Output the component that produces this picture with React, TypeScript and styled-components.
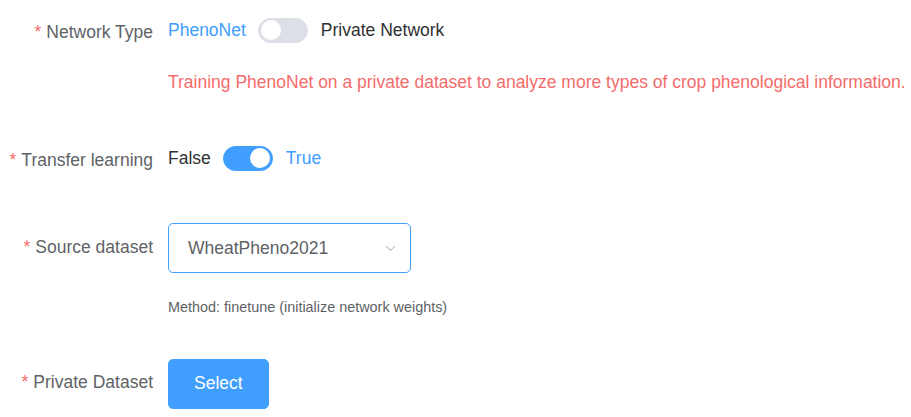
import React from "react";
import styled, { createGlobalStyle } from "styled-components";

const Global = createGlobalStyle`
  html, body { margin: 0; padding: 0; background: #fff; }
  body { font-family: "Liberation Sans", Arial, sans-serif; }
`;

const Form = styled.div`
  padding-top: 7px;
  font-family: "Liberation Sans", Arial, sans-serif;
  font-size: 17.5px;
`;

const Item = styled.div<{ $mb: number }>`
  margin-bottom: ${(p) => p.$mb}px;
`;

const Row = styled.div`
  display: flex;
  align-items: flex-start;
`;

const Label = styled.label`
  width: 168px;
  box-sizing: border-box;
  padding-right: 15px;
  text-align: right;
  line-height: 50px;
  height: 50px;
  color: #606266;
  flex-shrink: 0;
  &::before {
    content: "*";
    color: #f56c6c;
    margin-right: 5px;
  }
`;

const Content = styled.div`
  line-height: 50px;
  min-height: 50px;
  flex: 1;
  min-width: 0;
`;

const Indented = styled.div`
  margin-left: 168px;
`;

const SwitchWrap = styled.div`
  display: inline-flex;
  align-items: center;
  height: 25px;
  line-height: 25px;
  vertical-align: middle;
  margin-bottom: 6px;
`;

const SwitchLabel = styled.span<{ $active: boolean; $side: "left" | "right" }>`
  font-size: 17.5px;
  color: ${(p) => (p.$active ? "#409eff" : "#303133")};
  ${(p) => (p.$side === "left" ? "margin-right: 12.5px;" : "margin-left: 12.5px;")}
`;

const Track = styled.span<{ $on: boolean }>`
  position: relative;
  display: inline-block;
  width: 50px;
  height: 25px;
  box-sizing: border-box;
  border-radius: 12.5px;
  border: 1.25px solid ${(p) => (p.$on ? "#409eff" : "#dcdfe6")};
  background: ${(p) => (p.$on ? "#409eff" : "#dcdfe6")};
  &::after {
    content: "";
    position: absolute;
    top: 1.25px;
    left: ${(p) => (p.$on ? "26px" : "1.25px")};
    width: 20px;
    height: 20px;
    border-radius: 50%;
    background: #fff;
  }
`;

const Warning = styled.div`
  line-height: 50px;
  color: #f56c6c;
  white-space: nowrap;
`;

const Select = styled.div`
  display: inline-flex;
  align-items: center;
  justify-content: space-between;
  box-sizing: border-box;
  width: 243px;
  height: 50px;
  padding: 0 14px 0 19px;
  border: 1px solid #409eff;
  border-radius: 5px;
  color: #606266;
  vertical-align: middle;
  line-height: 48px;
`;

const Hint = styled.div`
  margin-top: 24px;
  font-size: 14.4px;
  line-height: 20px;
  color: #606266;
`;

const Button = styled.button`
  display: inline-block;
  height: 50px;
  padding: 0 25px;
  font-family: "Liberation Sans", Arial, sans-serif;
  font-size: 17.5px;
  color: #fff;
  background: #409eff;
  border: 1px solid #409eff;
  border-radius: 5px;
  vertical-align: middle;
  cursor: pointer;
`;

const Switch = ({ left, right, on }: { left: string; right: string; on: boolean }) => (
  <SwitchWrap>
    <SwitchLabel $active={!on} $side="left">{left}</SwitchLabel>
    <Track $on={on} />
    <SwitchLabel $active={on} $side="right">{right}</SwitchLabel>
  </SwitchWrap>
);

const Chevron = () => (
  <svg width="11" height="7" viewBox="0 0 11 7" fill="none">
    <path d="M1 1l4.5 4.5L10 1" stroke="#c0c4cc" strokeWidth="1.1" />
  </svg>
);

export default function App() {
  return (
    <>
      <Global />
      <Form>
        <Item $mb={28}>
          <Row>
            <Label>Network Type</Label>
            <Content>
              <Switch left="PhenoNet" right="Private Network" on={false} />
            </Content>
          </Row>
          <Indented>
            <Warning>
              Training PhenoNet on a private dataset to analyze more types of crop phenological information.
            </Warning>
          </Indented>
        </Item>
        <Item $mb={37}>
          <Row>
            <Label>Transfer learning</Label>
            <Content>
              <Switch left="False" right="True" on={true} />
            </Content>
          </Row>
        </Item>
        <Item $mb={40}>
          <Row>
            <Label>Source dataset</Label>
            <Content>
              <Select>
                <span>WheatPheno2021</span>
                <Chevron />
              </Select>
              <Hint>Method: finetune (initialize network weights)</Hint>
            </Content>
          </Row>
        </Item>
        <Item $mb={0}>
          <Row>
            <Label>Private Dataset</Label>
            <Content>
              <Button>Select</Button>
            </Content>
          </Row>
        </Item>
      </Form>
    </>
  );
}
